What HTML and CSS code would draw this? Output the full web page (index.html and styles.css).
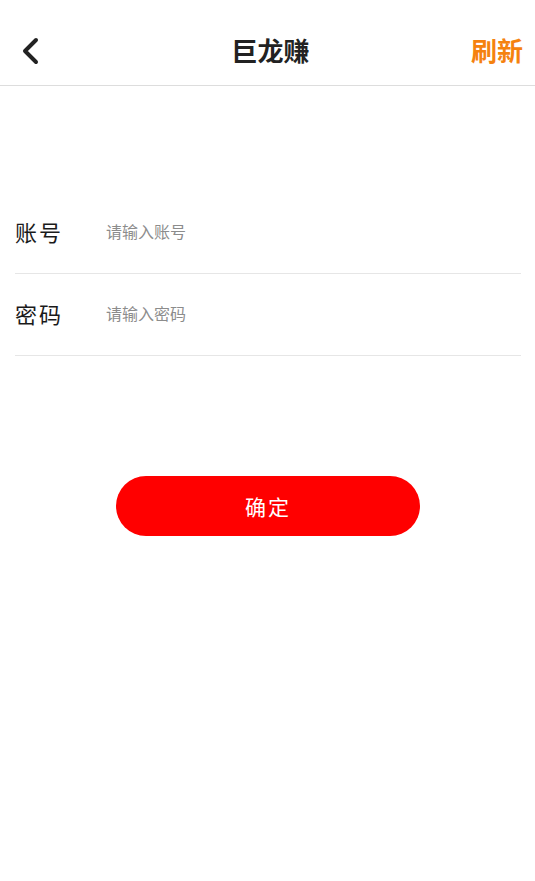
FILE: index.html
```html
<!DOCTYPE html>
<html>
<head>
    <meta charset="utf-8">
    <title>巨龙赚</title>
    <link rel="stylesheet" href="styles.css">
</head>
<body>
    <header class="topbar">
        <a class="back" href="#">
            <svg width="22" height="30" viewBox="0 0 22 30">
                <polyline points="16,4 5,15 16,26" fill="none" stroke="#222" stroke-width="4" stroke-linecap="round" stroke-linejoin="round"/>
            </svg>
        </a>
        <h1 class="title">巨龙赚</h1>
        <a class="refresh" href="#">刷新</a>
    </header>

    <form class="loginForm">
        <div class="field">
            <label for="account">账号</label>
            <input type="text" id="account" placeholder="请输入账号">
        </div>
        <div class="field">
            <label for="password">密码</label>
            <input type="password" id="password" placeholder="请输入密码">
        </div>
        <button type="button" class="submitButton">确定</button>
    </form>
</body>
</html>
```

FILE: styles.css
```css
body {
    margin: 0;
    font-family: "Noto Sans CJK SC", "Noto Sans", sans-serif;
    background-color: #ffffff;
    color: #222222;
}

.topbar {
    height: 71px;
    display: flex;
    align-items: center;
    justify-content: space-between;
    padding: 14px 12px 0 20px;
    border-bottom: 1px solid #dddddd;
    box-sizing: content-box;
}

.back {
    display: flex;
    width: 58px;
    padding-top: 2px;
}

.title {
    margin: 0;
    font-size: 26px;
    font-weight: 700;
    color: #222222;
}

.refresh {
    width: 60px;
    text-align: right;
    font-size: 26px;
    font-weight: 700;
    color: #f5820f;
    text-decoration: none;
}

.loginForm {
    display: flex;
    flex-direction: column;
    padding: 106px 14px 0 15px;
}

.field {
    height: 81px;
    display: flex;
    align-items: center;
    border-bottom: 1px solid #e6e6e6;
}

.field label {
    width: 91px;
    font-size: 22px;
    letter-spacing: 2px;
    color: #1a1a1a;
    margin-top: -3px;
}

.field input {
    flex: 1;
    border: none;
    outline: none;
    padding: 0;
    font-family: inherit;
    font-size: 16px;
    color: #333333;
    margin-top: -4px;
}

.field input::placeholder {
    color: #8c8c8c;
}

.submitButton {
    align-self: center;
    width: 304px;
    height: 60px;
    margin-top: 120px;
    margin-right: 0;
    border: none;
    border-radius: 30px;
    background-color: #ff0000;
    color: #ffffff;
    font-family: inherit;
    font-size: 21px;
    letter-spacing: 2px;
    cursor: pointer;
}
```
